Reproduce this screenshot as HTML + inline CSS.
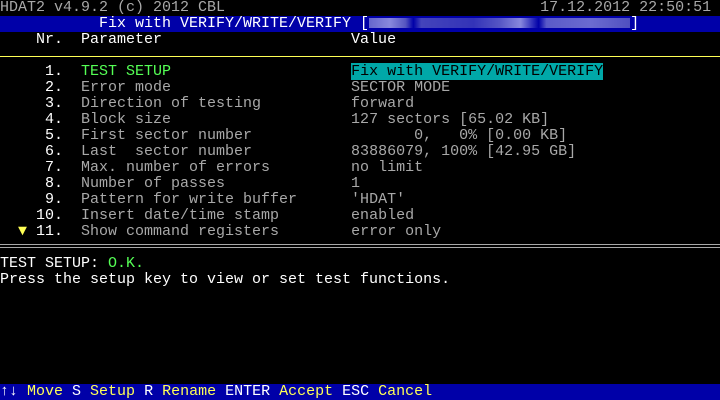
<!DOCTYPE html>
<html><head><meta charset="utf-8"><style>
html,body{margin:0;padding:0;background:#000;}
body{width:720px;height:400px;position:relative;overflow:hidden;font-family:"Liberation Mono",monospace;font-size:15px;}
.r{position:absolute;left:0;width:720px;height:16px;line-height:16px;white-space:pre;color:#a8a8a8;}
.w{color:#fff}.g{color:#55ff55}.y{color:#ffff55}
.bar{background:#0000a8}
.hl{background:#00a8a8;color:#000}
.bl{display:inline-block;height:10px;vertical-align:-1px}
</style></head><body>
<div class="r" style="top:0">HDAT2 v4.9.2 (c) 2012 CBL                                   17.12.2012 22:50:51</div>
<div class="r bar w" style="top:16px">           Fix with VERIFY/WRITE/VERIFY [<span class="bl" style="width:261px;background:linear-gradient(90deg,#6666cc 0,#8888dd 8%,#5555c0 14%,#0000a8 17%,#4444bb 20%,#3333b8 40%,#5555c4 50%,#8888dd 58%,#0000a8 65%,#5a5ac8 68%,#6b6bd0 85%,#5050c0 100%)"></span>]</div>
<div class="r w" style="top:32px">    Nr.  Parameter                     Value</div>
<div style="position:absolute;left:0;top:56px;width:720px;height:1px;background:#ffff55"></div>
<div class="r" style="top:64px"><span class="w">     1.  </span><span class="g">TEST SETUP</span>                    <span class="hl">Fix with VERIFY/WRITE/VERIFY</span></div>
<div class="r" style="top:80px"><span class="w">     2.  </span>Error mode                    SECTOR MODE</div>
<div class="r" style="top:96px"><span class="w">     3.  </span>Direction of testing          forward</div>
<div class="r" style="top:112px"><span class="w">     4.  </span>Block size                    127 sectors [65.02 KB]</div>
<div class="r" style="top:128px"><span class="w">     5.  </span>First sector number                  0,   0% [0.00 KB]</div>
<div class="r" style="top:144px"><span class="w">     6.  </span>Last  sector number           83886079, 100% [42.95 GB]</div>
<div class="r" style="top:160px"><span class="w">     7.  </span>Max. number of errors         no limit</div>
<div class="r" style="top:176px"><span class="w">     8.  </span>Number of passes              1</div>
<div class="r" style="top:192px"><span class="w">     9.  </span>Pattern for write buffer      'HDAT'</div>
<div class="r" style="top:208px"><span class="w">    10.  </span>Insert date/time stamp        enabled</div>
<div class="r" style="top:224px"><span class="y">  ▼</span><span class="w"> 11.  </span>Show command registers        error only</div>
<div style="position:absolute;left:0;top:244px;width:720px;height:1px;background:#a8a8a8"></div>
<div style="position:absolute;left:0;top:247px;width:720px;height:1px;background:#a8a8a8"></div>
<div class="r w" style="top:256px">TEST SETUP: <span class="g">O.K.</span></div>
<div class="r w" style="top:272px">Press the setup key to view or set test functions.</div>
<div class="r bar" style="top:384px"><span class="w">↑↓ </span><span class="y">Move </span><span class="w">S </span><span class="y">Setup </span><span class="w">R </span><span class="y">Rename </span><span class="w">ENTER </span><span class="y">Accept </span><span class="w">ESC </span><span class="y">Cancel</span></div>
</body></html>
